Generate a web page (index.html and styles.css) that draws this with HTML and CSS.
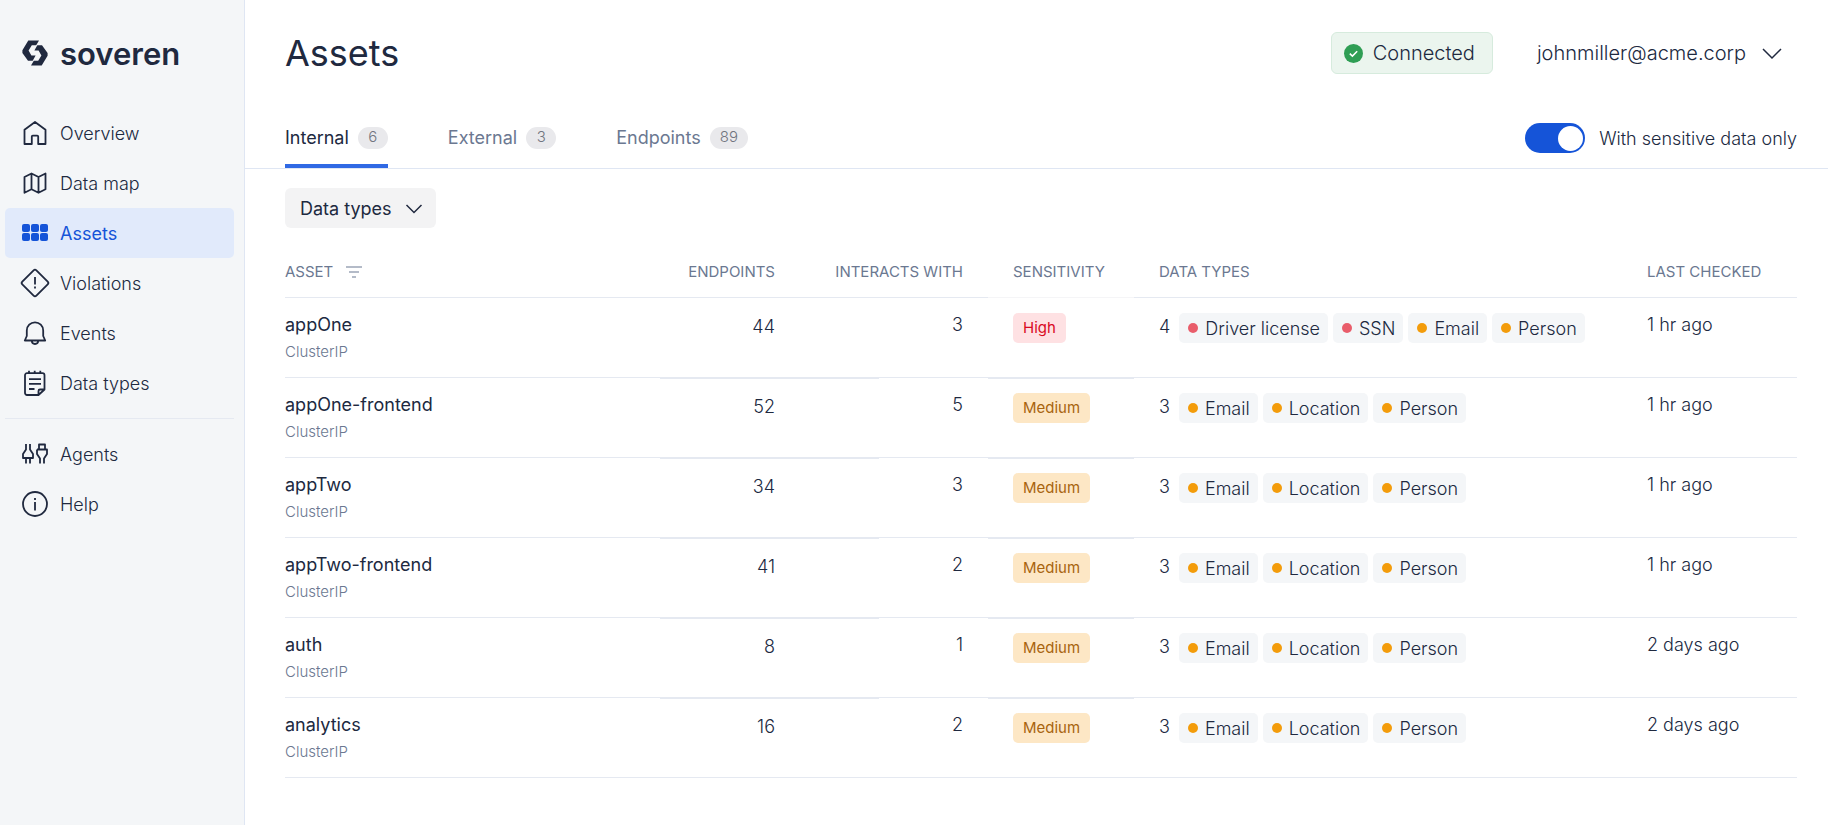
FILE: index.html
```html
<!DOCTYPE html>
<html lang="en">
<head>
<meta charset="utf-8">
<title>Soveren – Assets</title>
<link rel="stylesheet" href="styles.css">
</head>
<body>
<div class="app">
  <aside class="sidebar">
    <a class="logo" href="#">
      <svg class="logo-mark" viewBox="0 0 26 26" aria-hidden="true"><path d="M6.300.5H17L14.200 5.300H9.800L6.600 10.400 9.400 15.600H13.600L10.700 20.700H6L.4 12.900V10.200Z"/><path d="M19.700 25.500H9L11.800 20.700H16.200L19.400 15.600 16.600 10.400H12.400L15.300 5.300H20L25.600 13.100V15.800Z"/></svg>
      <span>soveren</span>
    </a>
    <nav class="nav">
      <a class="nav-item" href="#"><svg class="icon" viewBox="0 0 28 28"><path d="M3.500 10.800 14 3l10.500 7.800V25H17.200v-7.400a1 1 0 0 0-1-1h-4.400a1 1 0 0 0-1 1V25H3.500Z"/></svg>Overview</a>
      <a class="nav-item" href="#"><svg class="icon" viewBox="0 0 28 28"><path d="M3.500 8 10.500 4.500l7 3.500 7-3.500v15.800l-7 3.500-7-3.500-7 3.500ZM10.500 4.500v15.800M17.500 8v15.800"/></svg>Data map</a>
      <a class="nav-item nav-item-active" href="#" aria-current="page"><svg class="icon icon-solid" viewBox="0 0 28 28"><rect x="1" y="5" width="8" height="8" rx="2"/><rect x="10" y="5" width="8" height="8" rx="2"/><rect x="19" y="5" width="8" height="8" rx="2"/><rect x="1" y="14" width="8" height="8" rx="2"/><rect x="10" y="14" width="8" height="8" rx="2"/><rect x="19" y="14" width="8" height="8" rx="2"/></svg>Assets</a>
      <a class="nav-item" href="#"><svg class="icon" viewBox="0 0 28 28"><path d="M12.600 1.300a2 2 0 0 1 2.800 0l11.300 11.300a2 2 0 0 1 0 2.800L15.400 26.700a2 2 0 0 1-2.800 0L1.300 15.400a2 2 0 0 1 0-2.800ZM14 8v7.500M14 17.500v2"/></svg>Violations</a>
      <a class="nav-item" href="#"><svg class="icon" viewBox="0 0 28 28"><path d="M3.800 21.500h20.400l-2-4.500v-5.500a8.200 8.200 0 0 0-16.400 0V17ZM10.800 21.800a3.200 3.200 0 0 0 6.400 0"/></svg>Events</a>
      <a class="nav-item" href="#"><svg class="icon" viewBox="0 0 28 28"><path d="M17.500 26H6a2 2 0 0 1-2-2V6.200a2 2 0 0 1 2-2h15.500a2 2 0 0 1 2 2V20.500Zm0-.3V22a1.500 1.500 0 0 1 1.500-1.500h4.500M8 1.800v2.700M13.700 1.800v2.700M19.300 1.800v2.700M8 10.200h12M8 14.900h12M8 20h5.500"/></svg>Data types</a>
      <hr class="nav-divider">
      <a class="nav-item" href="#"><svg class="icon" viewBox="0 0 28 28"><path d="M5 4v5.500L2 14v4h10v-4L9 9.500V4M5 18v5.500M9 18v5.500M18 9.500V4.500h6v5M16 9.500h10V14l-3 4.500v5M16 9.500V14l3 4.500v5"/></svg>Agents</a>
      <a class="nav-item" href="#"><svg class="icon" viewBox="0 0 28 28"><circle cx="14" cy="14" r="12"/><path d="M14 12v8.500M14 8v2"/></svg>Help</a>
    </nav>
  </aside>

  <main class="main">
    <header class="header">
      <h1 class="title">Assets</h1>
      <div class="status"><svg class="status-icon" viewBox="0 0 19 19"><circle cx="9.500" cy="9.500" r="9.500"/><path d="M5.800 9.600l2.600 2.500 4.800-4.800"/></svg>Connected</div>
      <button class="account" type="button">johnmiller@acme.corp<svg class="chevron-large" viewBox="0 0 22 14"><path d="M2 3l9 9 9-9"/></svg></button>
    </header>

    <div class="tabbar">
      <div class="tabs" role="tablist">
        <button class="tab tab-active" type="button" role="tab" aria-selected="true">Internal<span class="count">6</span></button>
        <button class="tab" type="button" role="tab" aria-selected="false">External<span class="count">3</span></button>
        <button class="tab" type="button" role="tab" aria-selected="false">Endpoints<span class="count">89</span></button>
      </div>
      <label class="switch-label" for="sensitive"><input class="switch" type="checkbox" role="switch" id="sensitive" checked>With sensitive data only</label>
    </div>

    <section class="content">
      <button class="filter" type="button">Data types<svg class="chevron" viewBox="0 0 18 12"><path d="M1.500 3l7.500 7.500L16.500 3"/></svg></button>

      <table class="assets">
        <colgroup><col><col class="col-endpoints"><col class="col-interacts"><col class="col-sensitivity"><col class="col-types"><col class="col-checked"></colgroup>
        <thead>
          <tr>
            <th scope="col">ASSET<svg class="sort" viewBox="0 0 16 12"><path d="M0 1h16M3 6h10M6 11h4"/></svg></th>
            <th scope="col" class="num">ENDPOINTS</th>
            <th scope="col" class="num interacts">INTERACTS WITH</th>
            <th scope="col" class="sensitivity">SENSITIVITY</th>
            <th scope="col">DATA TYPES</th>
            <th scope="col">LAST CHECKED</th>
          </tr>
        </thead>
        <tbody>
          <tr>
            <td><div class="name">appOne</div><div class="kind">ClusterIP</div></td>
            <td class="num endpoints">44</td><td class="num interacts">3</td>
            <td class="sensitivity"><span class="badge badge-high">High</span></td>
            <td class="types"><div class="tags"><span class="total">4</span><span class="tag tag-high">Driver license</span><span class="tag tag-high">SSN</span><span class="tag">Email</span><span class="tag">Person</span></div></td>
            <td>1 hr ago</td>
          </tr>
          <tr>
            <td><div class="name">appOne-frontend</div><div class="kind">ClusterIP</div></td>
            <td class="num endpoints">52</td><td class="num interacts">5</td>
            <td class="sensitivity"><span class="badge">Medium</span></td>
            <td class="types"><div class="tags"><span class="total">3</span><span class="tag">Email</span><span class="tag">Location</span><span class="tag">Person</span></div></td>
            <td>1 hr ago</td>
          </tr>
          <tr>
            <td><div class="name">appTwo</div><div class="kind">ClusterIP</div></td>
            <td class="num endpoints">34</td><td class="num interacts">3</td>
            <td class="sensitivity"><span class="badge">Medium</span></td>
            <td class="types"><div class="tags"><span class="total">3</span><span class="tag">Email</span><span class="tag">Location</span><span class="tag">Person</span></div></td>
            <td>1 hr ago</td>
          </tr>
          <tr>
            <td><div class="name">appTwo-frontend</div><div class="kind">ClusterIP</div></td>
            <td class="num endpoints">41</td><td class="num interacts">2</td>
            <td class="sensitivity"><span class="badge">Medium</span></td>
            <td class="types"><div class="tags"><span class="total">3</span><span class="tag">Email</span><span class="tag">Location</span><span class="tag">Person</span></div></td>
            <td>1 hr ago</td>
          </tr>
          <tr>
            <td><div class="name">auth</div><div class="kind">ClusterIP</div></td>
            <td class="num endpoints">8</td><td class="num interacts">1</td>
            <td class="sensitivity"><span class="badge">Medium</span></td>
            <td class="types"><div class="tags"><span class="total">3</span><span class="tag">Email</span><span class="tag">Location</span><span class="tag">Person</span></div></td>
            <td>2 days ago</td>
          </tr>
          <tr>
            <td><div class="name">analytics</div><div class="kind">ClusterIP</div></td>
            <td class="num endpoints">16</td><td class="num interacts">2</td>
            <td class="sensitivity"><span class="badge">Medium</span></td>
            <td class="types"><div class="tags"><span class="total">3</span><span class="tag">Email</span><span class="tag">Location</span><span class="tag">Person</span></div></td>
            <td>2 days ago</td>
          </tr>
        </tbody>
      </table>
    </section>
  </main>
</div>
</body>
</html>
```
FILE: styles.css
```css
:root {
  --ink: #20293f;
  --muted: #6b7891;
  --line: #e5e9f1;
  --blue: #1554d8;
}

* { box-sizing: border-box; }

body {
  margin: 0;
  font-family: Inter, "Liberation Sans", sans-serif;
  font-size: 18px;
  line-height: 27px;
  font-weight: 300;
  color: var(--ink);
  background: #fff;
}

button {
  font: inherit;
  color: inherit;
  background: none;
  border: 0;
  padding: 0;
  cursor: pointer;
}

a { color: inherit; text-decoration: none; }

.app {
  display: grid;
  grid-template-columns: 245px minmax(0, 1fr);
  min-height: 100vh;
}

/* Sidebar */
.sidebar {
  background: #f4f6f8;
  border-right: 1px solid #dfe6f3;
  padding: 32px 10px 0 5px;
}

.logo {
  display: flex;
  align-items: center;
  gap: 12px;
  height: 42px;
  padding-left: 17px;
  margin-bottom: 34px;
  font-size: 31px;
  font-weight: 600;
}

.logo-mark { width: 26px; height: 26px; fill: var(--ink); }

.nav { display: flex; flex-direction: column; }

.nav-item {
  display: flex;
  align-items: center;
  gap: 11px;
  height: 50px;
  padding-left: 16px;
  border-radius: 5px;
}

.nav-item-active { background: #e1eafb; color: var(--blue); font-weight: 400; }

.icon {
  width: 28px;
  height: 28px;
  fill: none;
  stroke: currentColor;
  stroke-width: 1.800;
  stroke-linejoin: round;
  overflow: visible;
}

.icon-solid { fill: currentColor; stroke: none; }

.nav-divider {
  width: 100%;
  height: 1px;
  margin: 10px 0;
  border: 0;
  background: var(--line);
}

/* Header */
.header {
  display: flex;
  align-items: center;
  padding: 32px 45px 0 40px;
  font-size: 20px;
}

.title {
  margin: 0 auto 0 0;
  font-size: 36px;
  line-height: 42px;
  font-weight: 400;
}

.status {
  display: flex;
  align-items: center;
  gap: 10px;
  height: 42px;
  padding: 0 17px 0 12px;
  margin-right: 44px;
  border: 1px solid #d6ebdd;
  border-radius: 6px;
  background: #ebf5ee;
}

.status-icon { width: 19px; height: 19px; fill: #2f9e54; }
.status-icon path { fill: none; stroke: #fff; stroke-width: 1.500; }

.account { display: flex; align-items: center; gap: 15px; }

.chevron-large, .chevron {
  fill: none;
  stroke: currentColor;
  stroke-width: 1.500;
}
.chevron-large { width: 22px; height: 14px; }
.chevron { width: 18px; height: 12px; }

/* Tabs */
.tabbar {
  display: flex;
  justify-content: space-between;
  height: 95px;
  padding: 34px 31px 0 40px;
  border-bottom: 1px solid #dfe6f3;
}

.tabs { display: flex; gap: 60px; }

.tab {
  display: flex;
  align-items: center;
  gap: 9px;
  height: 60px;
  padding-top: 3px;
  border-bottom: 4px solid transparent;
  color: var(--muted);
  font-weight: 400;
}

.tab-active { color: var(--ink); border-bottom-color: #3069e4; border-radius: 2px 2px 0 0; }

.count {
  min-width: 30px;
  height: 22px;
  padding: 0 10px;
  border-radius: 11px;
  background: #e9e9ec;
  color: #71757f;
  font-size: 15px;
  line-height: 20px;
  font-weight: 300;
}

.switch-label {
  display: flex;
  align-items: center;
  gap: 14px;
  height: 60px;
}

.switch {
  appearance: none;
  display: flex;
  justify-content: flex-end;
  width: 60px;
  height: 30px;
  margin: 0;
  padding: 3px 2px;
  border-radius: 15px;
  background: var(--blue);
}

.switch::before {
  content: "";
  width: 25px;
  height: 25px;
  border-radius: 50%;
  background: #fff;
}

/* Content */
.content { padding: 19px 31px 40px 40px; }

.filter {
  display: flex;
  align-items: center;
  gap: 13px;
  height: 40px;
  padding: 0 13px 0 15px;
  margin-bottom: 24px;
  border-radius: 6px;
  background: #f3f3f4;
  font-weight: 400;
}

.assets {
  width: 100%;
  table-layout: fixed;
  border-collapse: separate;
  border-spacing: 0;
}

.col-endpoints { width: 140px; }
.col-interacts { width: 188px; }
.col-sensitivity { width: 146px; }
.col-types { width: 488px; }
.col-checked { width: 175px; }

.assets th {
  padding: 10px 0 15px 25px;
  border-bottom: 1px solid var(--line);
  color: var(--muted);
  font-size: 15px;
  line-height: 20px;
  font-weight: 400;
  text-align: left;
  white-space: nowrap;
}

.assets td {
  height: 80px;
  padding: 13px 0 0 25px;
  border-bottom: 1px solid var(--line);
  vertical-align: top;
}

.assets th:first-child, .assets td:first-child { padding-left: 0; }
.assets .num { padding-right: 25px; text-align: right; }
.assets th.sensitivity { border-bottom-color: #f5f5f7; }

.assets td.endpoints, .assets td.sensitivity {
  padding-top: 14px;
  border-top: 1px solid var(--line);
}
.assets td.types { padding-top: 15px; }
.assets tr:first-child td { border-top-color: transparent; }

/* The endpoints rule runs on under the start of the next column */
.assets tr + tr td.interacts {
  background: linear-gradient(var(--line), var(--line)) 0 0 / 79px 1px no-repeat;
}

.sort {
  width: 16px;
  height: 12px;
  margin-left: 13px;
  vertical-align: -1px;
  stroke: var(--muted);
  stroke-width: 1.200;
}

.name { font-weight: 400; }

.kind {
  margin-top: 3px;
  color: var(--muted);
  font-size: 15px;
  line-height: 22px;
}

.badge {
  display: block;
  width: fit-content;
  padding: 0 10px;
  border-radius: 5px;
  background: #fde7c5;
  color: #a8640f;
  font-size: 15px;
  line-height: 30px;
  font-weight: 400;
}

.badge-high { background: #fee1e3; color: #d90a22; }

.tags { display: flex; gap: 5px; }

.total { margin-right: 4px; }

.tag {
  display: flex;
  align-items: center;
  gap: 7px;
  height: 30px;
  padding: 0 8px 0 9px;
  border-radius: 5px;
  background: #f4f6f8;
}

.tag::before {
  content: "";
  width: 10px;
  height: 10px;
  border-radius: 50%;
  background: #f39c0b;
}

.tag-high::before { background: #e95d6b; }
```
